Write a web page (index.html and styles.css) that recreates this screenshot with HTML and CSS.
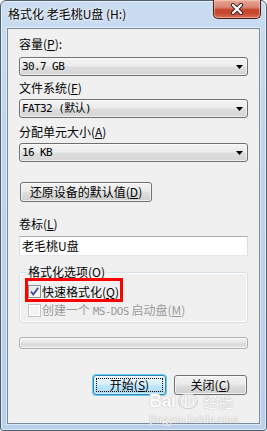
FILE: index.html
```html
<!DOCTYPE html>
<html lang="zh-CN">
<head>
<meta charset="utf-8">
<title>格式化 老毛桃U盘 (H:)</title>
<link rel="stylesheet" href="styles.css">
</head>
<body>
<div class="window">
  <div class="titlebar">
    <span class="title">格式化 老毛桃U盘 (H:)</span>
    <div class="close">
      <svg width="14" height="12" viewBox="0 0 14 12">
        <path d="M3 2 L11 10 M11 2 L3 10" stroke="#3b2626" stroke-width="4.2" stroke-linecap="round" fill="none"/>
        <path d="M3 2 L11 10 M11 2 L3 10" stroke="#ffffff" stroke-width="2.2" stroke-linecap="round" fill="none"/>
      </svg>
    </div>
  </div>
  <div class="client">
    <div class="label l1">容量(<u>P</u>):</div>
    <div class="combo c1"><span class="val">30.7 GB</span><svg class="arrow" width="7" height="4" viewBox="0 0 7 4"><polygon points="0,0 7,0 3.5,4" fill="#000"/></svg></div>
    <div class="label l2">文件系统(<u>F</u>)</div>
    <div class="combo c2"><span class="val">FAT32 (默认)</span><svg class="arrow" width="7" height="4" viewBox="0 0 7 4"><polygon points="0,0 7,0 3.5,4" fill="#000"/></svg></div>
    <div class="label l3">分配单元大小(<u>A</u>)</div>
    <div class="combo c3"><span class="val">16 KB</span><svg class="arrow" width="7" height="4" viewBox="0 0 7 4"><polygon points="0,0 7,0 3.5,4" fill="#000"/></svg></div>
    <div class="btn reset">还原设备的默认值(<u>D</u>)</div>
    <div class="label l4">卷标(<u>L</u>)</div>
    <div class="input">老毛桃U盘</div>
    <div class="group">
      <div class="legend">格式化选项(<u>O</u>)</div>
      <div class="row first">
        <span class="cb checked"><svg width="11" height="11" viewBox="0 0 11 11"><path d="M2 5.5 L4.3 8.5 L9.2 1.8" stroke="#3b4f9a" stroke-width="1.9" fill="none"/></svg></span>
        <span class="rtext">快速格式化(<u>Q</u>)</span>
      </div>
      <div class="row disabled">
        <span class="cb off"></span>
        <span class="rtext">创建一个 <span class="mono">MS-DOS</span> 启动盘(<u>M</u>)</span>
      </div>
      <div class="highlight"></div>
    </div>
    <div class="progress"></div>
    <div class="actions">
      <div class="btn primary"><span class="focus">开始(<u>S</u>)</span></div>
      <div class="btn">关闭(<u>C</u>)</div>
    </div>
    <div class="watermark">
      <div class="wm-top"><span class="wm-bai">Bai</span><span class="wm-paw">du</span><span class="wm-jy">经验</span></div>
      <div class="wm-url">jingyan.baidu.com</div>
    </div>
  </div>
</div>
</body>
</html>
```
FILE: styles.css
```css
* { box-sizing: border-box; }
html, body { margin: 0; padding: 0; }
body {
  width: 267px;
  height: 431px;
  background: #ffffff;
  font-family: "Noto Sans CJK SC", "Liberation Sans", sans-serif;
  font-size: 12px;
  color: #000;
  overflow: hidden;
}
u { text-decoration: underline; text-underline-offset: 1px; }

.window {
  width: 267px;
  height: 431px;
  border: 1px solid #4f5f70;
  border-radius: 6px 6px 3px 3px;
  background: linear-gradient(to bottom, #cadcf1 0%, #c0d5ed 30%, #b9d0ea 100%);
  box-shadow: inset 0 0 0 1px rgba(255,255,255,0.55);
  display: flex;
  flex-direction: column;
}

.titlebar {
  height: 27px;
  display: flex;
  align-items: flex-start;
  justify-content: space-between;
  flex: none;
}
.title {
  margin: 5px 0 0 7px;
  font-size: 12px;
  line-height: 16px;
  color: #000;
  text-shadow: 0 0 5px rgba(255,255,255,0.9), 0 0 2px rgba(255,255,255,0.9);
}
.close {
  width: 48px;
  height: 19px;
  margin: -1px 5px 0 0;
  border: 1px solid #4a1e1a;
  border-top: none;
  border-radius: 0 0 5px 5px;
  background: linear-gradient(to bottom, #e9a896 0%, #d98572 40%, #c4452c 55%, #c8492f 75%, #d9755a 100%);
  box-shadow: inset 0 0 0 1px rgba(255,220,210,0.45);
  display: flex;
  align-items: center;
  justify-content: center;
}

.client {
  margin: 0 6px 6px 6px;
  height: 396px;
  flex: none;
  border: 1px solid #7d8998;
  box-shadow: 0 0 0 1px rgba(235,242,250,0.7);
  background: #f0f0f0;
  padding: 8px 11px 0 11px;
  position: relative;
}

.label {
  height: 14px;
  line-height: 14px;
  white-space: nowrap;
}
.l2 { margin-top: 5px; }
.l3 { margin-top: 7px; }
.l4 { margin-top: 15px; }

.combo {
  height: 19px;
  margin-top: 4px;
  border: 1px solid #707070;
  border-radius: 3px;
  background: linear-gradient(to bottom, #f3f3f3 0%, #ececec 45%, #dddddd 55%, #d6d6d6 100%);
  box-shadow: inset 0 0 0 1px rgba(255,255,255,0.6);
  display: flex;
  align-items: center;
  justify-content: space-between;
  padding: 0 4px 0 2px;
}
.c1 { margin-top: 6px; }
.val {
  font-family: "DejaVu Sans Mono", "Noto Sans CJK SC", monospace;
  font-size: 11px;
  letter-spacing: -0.6px;
  line-height: 14px;
  white-space: nowrap;
}
.arrow { flex: none; margin-top: 1px; }

.btn {
  height: 20px;
  width: 73px;
  border: 1px solid #707070;
  border-radius: 3px;
  background: linear-gradient(to bottom, #f2f2f2 0%, #ebebeb 45%, #dddddd 55%, #cfcfcf 100%);
  box-shadow: inset 0 0 0 1px rgba(255,255,255,0.7);
  display: flex;
  align-items: center;
  justify-content: center;
  line-height: 14px;
  white-space: nowrap;
}
.reset {
  width: 132px;
  margin: 20px 0 0 1px;
}

.input {
  margin-top: 5px;
  height: 20px;
  background: #ffffff;
  border: 1px solid #dbdfe6;
  border-top-color: #abadb3;
  border-bottom-color: #e3e9ef;
  padding: 0 2px;
  line-height: 18px;
  font-size: 12px;
}

.group {
  margin-top: 16px;
  height: 51px;
  border: 1px solid #d5dfe5;
  border-radius: 3px;
  box-shadow: inset 0 0 0 1px #ffffff;
  position: relative;
}
.legend {
  display: block;
  width: max-content;
  height: 14px;
  line-height: 14px;
  margin: -8px 0 0 6px;
  padding: 0 2px;
  background: #f0f0f0;
}
.row {
  height: 19px;
  display: flex;
  align-items: center;
  padding-left: 8px;
  line-height: 14px;
  white-space: nowrap;
}
.row.first { margin-top: 3px; }
.cb {
  width: 13px;
  height: 13px;
  flex: none;
  margin-right: 1px;
  border: 1px solid #8e8f8f;
  background: linear-gradient(135deg, #dcdcdc 0%, #f0f0f0 50%, #ffffff 100%);
  box-shadow: inset 0 0 0 1px #f4f4f4;
  display: flex;
  align-items: center;
  justify-content: center;
}
.cb.off {
  border-color: #c4c4c4;
  background: #f4f4f4;
  box-shadow: inset 0 0 0 1px #ffffff;
}
.disabled { color: #9b9b9b; }
.mono {
  font-family: "DejaVu Sans Mono", monospace;
  font-size: 11px;
  letter-spacing: -0.6px;
}
.highlight {
  position: absolute;
  left: 5px;
  top: 5px;
  width: 98px;
  height: 24px;
  border: 3px solid #ff0000;
}

.progress {
  margin-top: 14px;
  height: 12px;
  border: 1px solid #b0b0b0;
  border-radius: 3px;
  background: linear-gradient(to bottom, #f4f4f4 0%, #e8e8e8 40%, #d9d9d9 60%, #e6e6e6 100%);
  box-shadow: inset 0 0 0 1px rgba(255,255,255,0.6);
}

.actions {
  margin-top: 26px;
  display: flex;
  justify-content: flex-end;
  gap: 8px;
  padding-right: 1px;
}
.primary {
  border-color: #3c7fb1;
  background: linear-gradient(to bottom, #eaf6fd 0%, #d9f0fc 45%, #bee6fd 55%, #a7d9f5 100%);
  box-shadow: 0 0 0 1px #5fd0f8, inset 0 0 0 1px rgba(255,255,255,0.5);
  padding: 2px;
}
.primary .focus {
  flex: 1;
  height: 100%;
  border: 1px dotted #000;
  display: flex;
  align-items: center;
  justify-content: center;
}

.watermark {
  position: absolute;
  left: 141px;
  top: 364px;
  color: #fbfbfb;
  text-shadow: 0 0 1px #b4b4b4, 0 0 1px #c0c0c0;
  pointer-events: none;
}
.wm-top {
  display: flex;
  align-items: center;
  height: 17px;
}
.wm-bai {
  font-family: "Liberation Sans", sans-serif;
  font-weight: bold;
  font-size: 18px;
  line-height: 17px;
  letter-spacing: -0.5px;
}
.wm-paw {
  font-family: "Liberation Sans", sans-serif;
  font-weight: bold;
  font-size: 12px;
  line-height: 13px;
  width: 20px;
  height: 15px;
  margin-left: 2px;
  border-radius: 8px 8px 9px 9px;
  border: 1px solid #d0d0d0;
  text-align: center;
}
.wm-jy {
  font-size: 15px;
  line-height: 17px;
  margin-left: 6px;
}
.wm-url {
  font-family: "Liberation Serif", serif;
  font-size: 12px;
  line-height: 12px;
  margin-top: 3px;
}
```
